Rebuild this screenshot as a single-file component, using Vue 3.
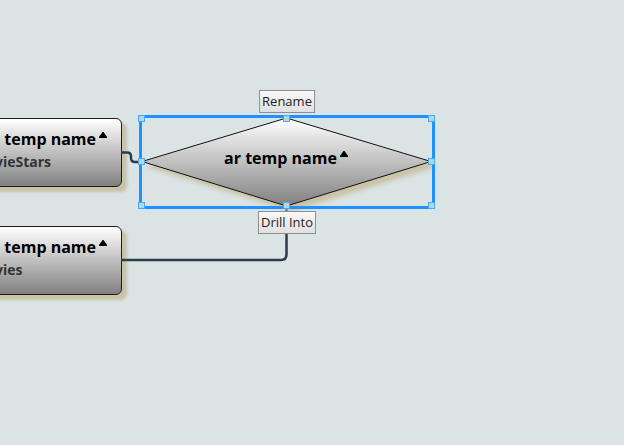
<script setup>
const entities = [
  { id: 'stars', title: 'temp name', type: 'vieStars' },
  { id: 'movies', title: 'temp name', type: 'vies' },
]
const handles = ['nw', 'n', 'ne', 'w', 'e', 'sw', 's', 'se']
</script>

<template>
  <main class="canvas">
    <section v-for="e in entities" :key="e.id" class="entity" :class="e.id">
      <h2 class="title">{{ e.title }}<svg class="caret" viewBox="0 0 8 6" aria-hidden="true"><path d="M0 6V5L3.500 0H4.500L8 5V6Z" /></svg></h2>
      <p class="type">{{ e.type }}</p>
    </section>

    <svg class="links" aria-hidden="true">
      <path d="M121 152.500H127Q131 152.500 131 156.500V158Q131 162 135 162H142" />
      <path d="M121 260H281Q286.500 260 286.500 254.500V206" />
    </svg>

    <section class="relation">
      <svg class="diamond" viewBox="0 0 296 94" aria-hidden="true">
        <defs>
          <linearGradient id="face" x1="0" y1="0" x2="0" y2="1">
            <stop offset="0" stop-color="#fff" />
            <stop offset="1" stop-color="#808080" />
          </linearGradient>
        </defs>
        <path d="M3 46.500L147.500 3L292 46.500L147.500 91Z" />
      </svg>
      <h2 class="title">ar temp name<svg class="caret" viewBox="0 0 8 6" aria-hidden="true"><path d="M0 6V5L3.500 0H4.500L8 5V6Z" /></svg></h2>
      <div class="selection">
        <span v-for="h in handles" :key="h" class="handle" :class="h"></span>
      </div>
      <button type="button" class="action rename">Rename</button>
      <button type="button" class="action drill">Drill Into</button>
    </section>
  </main>
</template>

<style>
body {
  background: #dae4e4;
}
</style>

<style scoped>
.canvas {
  position: relative;
  min-height: 100vh;
  overflow: hidden;
  background: #dae4e4;
  font-family: "Open Sans", "Noto Sans", sans-serif;
}
.links {
  position: absolute;
  inset: 0;
  width: 100%;
  height: 100%;
  fill: none;
  stroke: #2d3b4a;
  stroke-width: 2.5;
}
.entity {
  position: absolute;
  left: -16px;
  box-sizing: border-box;
  width: 138px;
  height: 69px;
  padding: 9px 12px 0 10px;
  border: 1px solid #1c1c1c;
  border-radius: 6px;
  background: linear-gradient(#fff, #808080);
  box-shadow: 5px 5px 3px #c9c2a8;
}
.stars {
  top: 118px;
}
.movies {
  top: 226px;
}
.title {
  display: flex;
  justify-content: flex-end;
  margin: 0;
  color: #000;
  font-size: 16px;
  font-weight: 700;
  line-height: 22px;
  white-space: nowrap;
}
.caret {
  width: 8px;
  height: 6px;
  margin: 4px 2px 0 3px;
}
.type {
  margin: 0;
  color: #333;
  font-size: 14px;
  font-weight: 700;
  line-height: 24px;
}
.relation {
  position: absolute;
  left: 139px;
  top: 115px;
  display: flex;
  justify-content: center;
  width: 296px;
  height: 94px;
}
.relation > .title {
  position: relative;
  padding-top: 32px;
}
.relation .caret {
  margin-top: 4px;
}
.diamond {
  position: absolute;
  inset: 0;
  width: 100%;
  height: 100%;
  overflow: visible;
  fill: url(#face);
  stroke: #111;
  filter: drop-shadow(5px 5px 2px #c9c2a8);
}
.selection {
  position: absolute;
  inset: 0;
  border: 3px solid #1e90ff;
}
.handle {
  position: absolute;
  box-sizing: border-box;
  width: 7px;
  height: 7px;
  border: 1px solid #4aa8fa;
  background: #add8e6;
}
.nw, .w, .sw {
  left: -4px;
}
.n, .s {
  left: calc(50% - 4px);
}
.ne, .e, .se {
  right: -3px;
}
.nw, .n, .ne {
  top: -3px;
}
.w, .e {
  top: calc(50% - 4px);
}
.sw, .s, .se {
  bottom: -3px;
}
.action {
  position: absolute;
  left: 50%;
  transform: translateX(-50%);
  box-sizing: border-box;
  height: 23px;
  padding: 0 2px;
  border: 1px solid #8f8f8f;
  background: linear-gradient(#f8f8f8, #e0e0e0);
  color: #222;
  font-family: inherit;
  font-size: 13px;
  line-height: 19px;
  white-space: nowrap;
}
.rename {
  bottom: 96px;
}
.drill {
  top: 96px;
}
</style>
